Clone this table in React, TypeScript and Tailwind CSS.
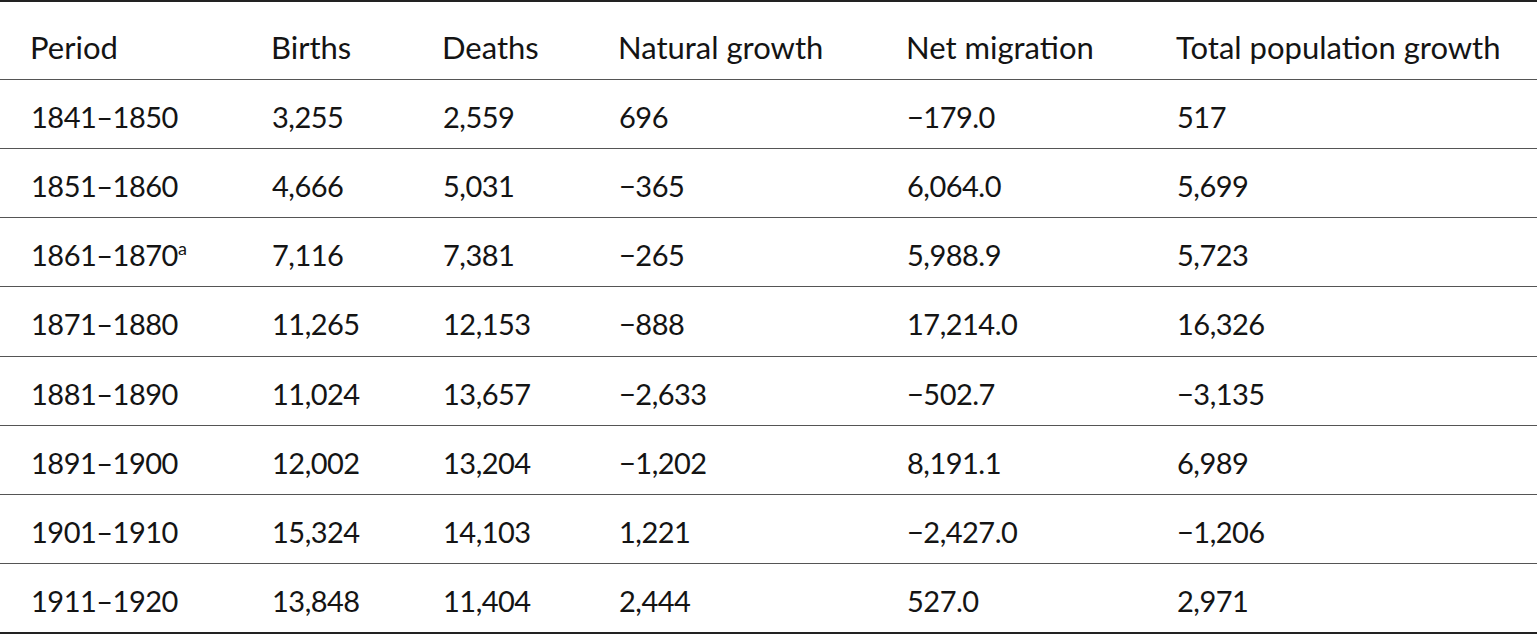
import React from "react";

const rows: [React.ReactNode, string, string, string, string, string][] = [
  ["1841–1850", "3,255", "2,559", "696", "−179.0", "517"],
  ["1851–1860", "4,666", "5,031", "−365", "6,064.0", "5,699"],
  [
    <>
      1861–1870<sup className="text-[18px] top-[-0.6em]">a</sup>
    </>,
    "7,116",
    "7,381",
    "−265",
    "5,988.9",
    "5,723",
  ],
  ["1871–1880", "11,265", "12,153", "−888", "17,214.0", "16,326"],
  ["1881–1890", "11,024", "13,657", "−2,633", "−502.7", "−3,135"],
  ["1891–1900", "12,002", "13,204", "−1,202", "8,191.1", "6,989"],
  ["1901–1910", "15,324", "14,103", "1,221", "−2,427.0", "−1,206"],
  ["1911–1920", "13,848", "11,404", "2,444", "527.0", "2,971"],
];

const headers = [
  "Period",
  "Births",
  "Deaths",
  "Natural growth",
  "Net migration",
  "Total population growth",
];

export default function App() {
  return (
    <div className="w-[1537px] h-[637px] bg-white text-[#141414] font-['Lato',sans-serif]">
      <table className="w-[1537px] table-fixed border-collapse border-t-2 border-b-2 border-[#222]">
        <colgroup>
          <col className="w-[241px]" />
          <col className="w-[171px]" />
          <col className="w-[176px]" />
          <col className="w-[288px]" />
          <col className="w-[270px]" />
          <col className="w-[391px]" />
        </colgroup>
        <thead>
          <tr className="h-[78px] border-b border-[#555]">
            {headers.map((h) => (
              <th
                key={h}
                className="pl-[30px] text-left font-normal text-[31px] leading-none whitespace-nowrap align-middle pt-[14px]"
              >
                {h}
              </th>
            ))}
          </tr>
        </thead>
        <tbody>
          {rows.map((r, i) => (
            <tr key={i} className={`h-[69.25px] ${i < rows.length - 1 ? "border-b border-[#555]" : ""}`}>
              {r.map((c, j) => (
                <td
                  key={j}
                  className="pl-[31px] text-[29px] leading-none tracking-[-0.5px] whitespace-nowrap align-middle pt-[5px]"
                >
                  {c}
                </td>
              ))}
            </tr>
          ))}
        </tbody>
      </table>
    </div>
  );
}
